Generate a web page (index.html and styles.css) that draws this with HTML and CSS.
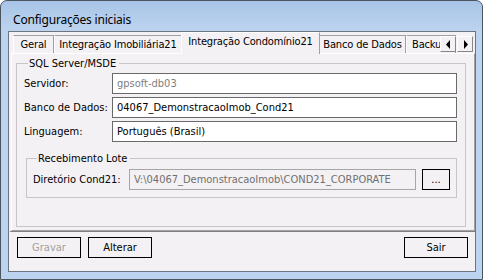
FILE: index.html
```html
<!DOCTYPE html>
<html>
<head>
<meta charset="utf-8">
<link rel="stylesheet" href="styles.css">
</head>
<body>
<div class="window">
  <div class="titlebar">Configurações iniciais</div>
  <div class="client">
    <div class="tabstrip">
      <div class="tab t-geral">Geral</div>
      <div class="tab t-imob">Integração Imobiliária21</div>
      <div class="tab active">Integração Condomínio21</div>
      <div class="tab t-banco">Banco de Dados</div>
      <div class="tab t-backup">Backup</div>
      <div class="arrows">
        <div class="arrow"><svg width="5" height="9" viewBox="0 0 5 9"><path d="M4 0 L0 4.5 L4 9 Z" fill="#000"/></svg></div>
        <div class="arrow"><svg width="5" height="9" viewBox="0 0 5 9"><path d="M1 0 L5 4.5 L1 9 Z" fill="#000"/></svg></div>
      </div>
    </div>
    <div class="panel">
      <fieldset class="group sql">
        <legend>SQL Server/MSDE</legend>
        <div class="row"><span class="lbl">Servidor:</span><div class="input dis">gpsoft-db03</div></div>
        <div class="row"><span class="lbl">Banco de Dados:</span><div class="input">04067_DemonstracaoImob_Cond21</div></div>
        <div class="row"><span class="lbl">Linguagem:</span><div class="input">Português (Brasil)</div></div>
        <fieldset class="group lote">
          <legend>Recebimento Lote</legend>
          <div class="row2"><span class="lbl2">Diretório Cond21:</span><div class="input ro">V:\04067_DemonstracaoImob\COND21_CORPORATE</div><div class="btn small">...</div></div>
        </fieldset>
      </fieldset>
    </div>
    <div class="footer">
      <div class="btn dis">Gravar</div>
      <div class="btn">Alterar</div>
      <div class="spacer"></div>
      <div class="btn">Sair</div>
    </div>
  </div>
</div>
</body>
</html>
```
FILE: styles.css
```css
html, body { margin: 0; padding: 0; }
body { width: 483px; height: 280px; overflow: hidden; background: #fff; font-family: "DejaVu Sans Condensed", "DejaVu Sans", sans-serif; font-size: 11px; color: #000; }
.window {
  box-sizing: border-box; width: 483px; height: 280px;
  border: 1px solid #4a5560; border-radius: 7px 7px 0 0;
  background: linear-gradient(to bottom, #a8c4e6 0px, #bcd4ef 30px, #bcd4ef 100%);
  padding: 0 6px 7px 7px; display: flex; flex-direction: column;
}
.titlebar { height: 30px; box-sizing: border-box; padding: 12px 0 0 5px; font-family: "Noto Sans", sans-serif; font-size: 12px; line-height: 14px; letter-spacing: -0.2px; color: #000; }
.client {
  flex: 1; background: #f4f1f4; border: 1px solid #6b7580;
  display: flex; flex-direction: column; padding: 0 0 0 1px;
}
.tabstrip { height: 21px; display: flex; align-items: flex-end; padding-left: 3px; position: relative; }
.tab {
  height: 18px; box-sizing: border-box; padding: 2px 0 0 0; text-align: center; border: 1px solid #a0a0a0; border-bottom: none;
  border-left-color: #fff; background: #f4f1f4; white-space: nowrap; letter-spacing: -0.15px;
}
.t-geral { width: 41px; }
.t-imob { width: 128px; }
.t-banco { width: 87px; margin-left: -1px; }
.t-backup { width: 50px; overflow: hidden; text-align: left; padding-left: 5px; }
.tab.active { width: 139px; height: 22px; padding-top: 2px; border-color: #fff #a0a0a0 transparent #fff; position: relative; z-index: 2; margin: 0 0 -1px -1px; }
.arrows { display: flex; position: absolute; right: 2px; bottom: 1px; z-index: 3; }
.arrow { width: 16px; height: 16px; box-sizing: border-box; border: 1px solid #fff; border-right-color: #888; border-bottom-color: #888; background: #f4f1f4; display: flex; align-items: center; justify-content: center; margin-left: 1px; }
.panel { height: 178px; margin: 0 0 0 1px; border: 1px solid #a0a0a0; border-left-color: #fff; border-top-color: #fff; padding: 3px 8px 0 4px; box-sizing: border-box; }
.group { border: 1px solid #c8c4c8; margin: 0; padding: 0; }
.group legend { padding: 0 3px 0 1px; margin-left: 4px; }
.sql { padding: 3px 8px 5px 7px; height: 170px; box-sizing: border-box; }
.row { display: flex; align-items: center; margin-bottom: 3px; }
.lbl { width: 88px; }
.input { flex: 1; height: 21px; box-sizing: border-box; border: 1px solid #6a6a6a; background: #fff; padding: 3px 0 0 4px; white-space: nowrap; overflow: hidden; }
.input.dis { color: #808080; }
.input.ro { background: #f4f1f4; color: #707070; border-color: #a6a6a6; }
.lote { margin: 10px 0 0 2px; padding: 4px 6px 7px 6px; }
.row2 { display: flex; align-items: center; }
.lbl2 { width: 96px; }
.btn { width: 64px; height: 21px; box-sizing: border-box; border: 1px solid #000; display: flex; align-items: center; justify-content: center; background: #f4f1f4; }
.btn.small { width: 28px; margin-left: 6px; }
.btn.dis { color: #a0a0a0; }
.footer { flex: 1; display: flex; align-items: flex-start; padding: 5px 7px 0 7px; gap: 7px; border-top: 1px solid #808080; }
.spacer { flex: 1; }
```
